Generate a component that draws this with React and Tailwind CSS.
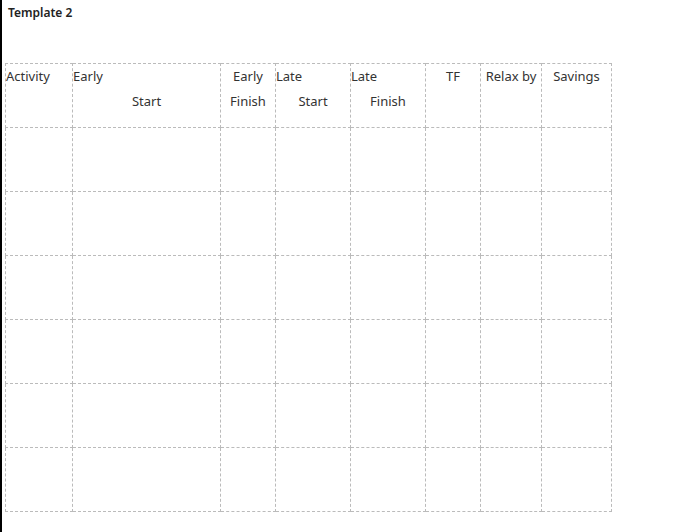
import React from "react";

const cols = [
  { w: "w-[67px]", l1: "Activity", a1: "text-left", l2: "", a2: "text-center" },
  { w: "w-[148px]", l1: "Early", a1: "text-left", l2: "Start", a2: "text-center" },
  { w: "w-[55px]", l1: "Early", a1: "text-center", l2: "Finish", a2: "text-center" },
  { w: "w-[75px]", l1: "Late", a1: "text-left", l2: "Start", a2: "text-center" },
  { w: "w-[75px]", l1: "Late", a1: "text-left", l2: "Finish", a2: "text-center" },
  { w: "w-[55px]", l1: "TF", a1: "text-center", l2: "", a2: "text-center" },
  { w: "w-[61px]", l1: "Relax by", a1: "text-center", l2: "", a2: "text-center" },
  { w: "w-[70px]", l1: "Savings", a1: "text-center", l2: "", a2: "text-center" },
];

export default function App() {
  return (
    <div
      className="min-h-[532px] bg-white border-l-2 border-black text-[#333]"
      style={{ fontFamily: '"Noto Sans", "Open Sans", sans-serif' }}
    >
      <div className="pl-[6px] pt-[3px] text-[12px] font-semibold leading-[20px] text-[#222]">
        Template 2
      </div>
      <div className="pl-[3px] pt-[40px]">
        <table className="border-collapse table-fixed">
          <thead>
            <tr>
              {cols.map((c, i) => (
                <th
                  key={i}
                  className={`${c.w} h-[64px] p-0 align-top font-normal border border-dashed border-[#bbb] text-[13px] whitespace-nowrap`}
                >
                  <div className={`leading-[25px] h-[25px] ${c.a1}`}>{c.l1}</div>
                  <div className={`leading-[25px] h-[25px] ${c.a2}`}>{c.l2}</div>
                </th>
              ))}
            </tr>
          </thead>
          <tbody>
            {[0, 1, 2, 3, 4, 5].map((r) => (
              <tr key={r}>
                {cols.map((c, i) => (
                  <td
                    key={i}
                    className="h-[64px] p-0 border border-dashed border-[#bbb]"
                  ></td>
                ))}
              </tr>
            ))}
          </tbody>
        </table>
      </div>
    </div>
  );
}
